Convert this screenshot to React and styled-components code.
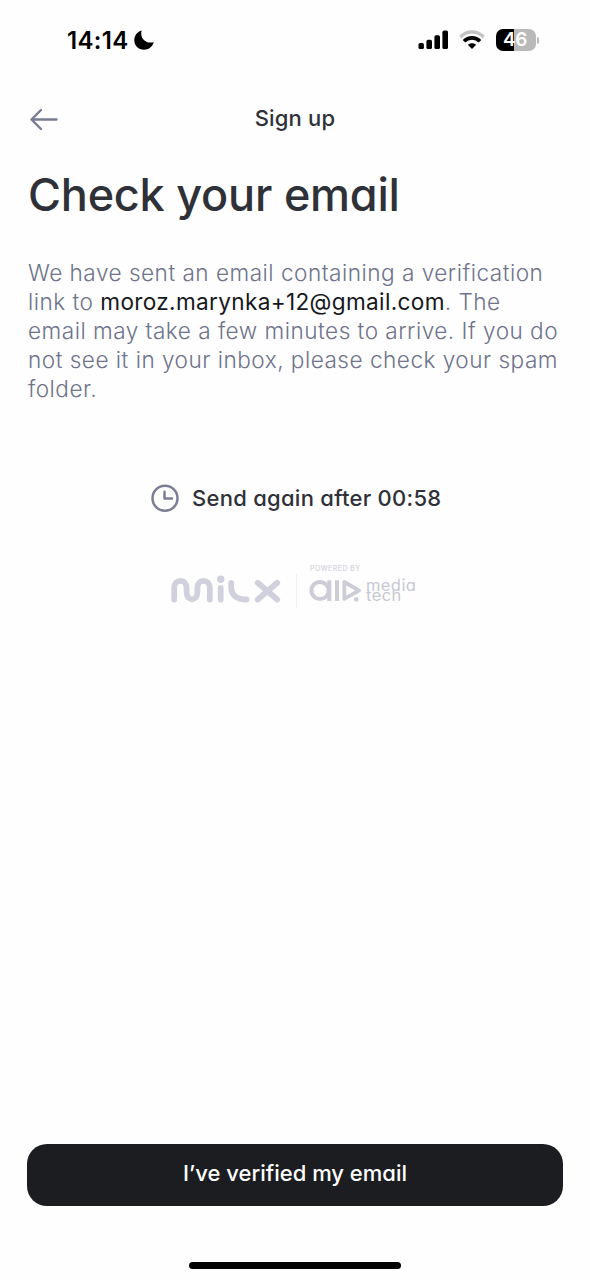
import React from "react";
import styled, { createGlobalStyle } from "styled-components";

const GlobalStyle = createGlobalStyle`
  *, *::before, *::after { box-sizing: border-box; }
  body { margin: 0; background: #fefefe; }
  svg { display: block; flex: none; }
`;

const Screen = styled.div`
  width: 590px;
  height: 1280px;
  display: flex;
  flex-direction: column;
  background: #fefefe;
  color: #2f3138;
  font-family: Inter, "Liberation Sans", sans-serif;
  overflow: hidden;
`;

const StatusBar = styled.header`
  height: 80px;
  padding: 0 51px 0 67px;
  display: flex;
  align-items: center;
  justify-content: space-between;
  color: #000;
`;

const StatusGroup = styled.div`
  display: flex;
  align-items: center;
  gap: ${(p) => p.$gap}px;
`;

const Time = styled.span`
  font-size: 24px;
  line-height: 30px;
  font-weight: 600;
  letter-spacing: 0.3px;
  padding-top: 1px;
`;

const BatteryWrap = styled.div`
  display: flex;
  align-items: center;
  gap: 1px;
`;

const Battery = styled.div`
  width: 40px;
  height: 22px;
  border-radius: 7px;
  background: linear-gradient(90deg, #000 46%, #b9b9b9 46%);
  color: #fff;
  font-size: 19px;
  line-height: 22px;
  font-weight: 600;
  text-align: center;
  letter-spacing: -0.3px;
  padding-right: 2px;
`;

const BatteryTip = styled.div`
  width: 2px;
  height: 7px;
  border-radius: 0 2px 2px 0;
  background: #b9b9b9;
`;

const NavBar = styled.nav`
  height: 78px;
  padding: 0 28px;
  display: grid;
  grid-template-columns: 60px 1fr 60px;
  align-items: center;
`;

const BackButton = styled.button`
  width: 32px;
  height: 32px;
  padding: 0;
  border: 0;
  background: none;
`;

const NavTitle = styled.div`
  text-align: center;
  font-size: 22px;
  line-height: 28px;
  font-weight: 500;
  letter-spacing: 0.2px;
  padding-bottom: 2px;
  font-feature-settings: "cv11";
`;

const Content = styled.main`
  flex: 1;
  padding: 8px 28px 0;
  display: flex;
  flex-direction: column;
`;

const Title = styled.h1`
  margin: 0;
  font-size: 45px;
  line-height: 58px;
  font-weight: 500;
  letter-spacing: -0.22px;
  white-space: nowrap;
  font-feature-settings: "cv11";
`;

const Message = styled.p`
  margin: 34px -10px 0 0;
  font-size: 22.6px;
  line-height: 29px;
  font-weight: 300;
  letter-spacing: 0.48px;
  color: #6f738b;
`;

const Line = styled.span`
  display: block;
  white-space: nowrap;
`;

const Email = styled.span`
  font-weight: 400;
  letter-spacing: 0.33px;
  color: #17181c;
`;

const Resend = styled.div`
  margin: 81px 0 0 123px;
  height: 28px;
  display: flex;
  align-items: center;
  gap: 13px;
  font-size: 22px;
  font-weight: 500;
  letter-spacing: 0.27px;
  white-space: nowrap;
  font-feature-settings: "cv11";
`;

const Brands = styled.div`
  margin: 51px 0 0 143px;
  display: flex;
  height: 46px;
`;

const MilxLogo = styled.svg`
  margin-top: 12px;
`;

const Divider = styled.div`
  width: 1px;
  height: 34px;
  margin: 11px 12px 0 15px;
  background: #f0f0f4;
`;

const Partner = styled.div`
  display: flex;
  flex-direction: column;
`;

const PoweredBy = styled.div`
  padding: 1px 0 0 1px;
  font-size: 7px;
  line-height: 10px;
  letter-spacing: 0.45px;
  color: #c9c9d3;
  white-space: nowrap;
`;

const PartnerRow = styled.div`
  display: flex;
  gap: 4px;
  margin-top: 3px;
`;

const PartnerName = styled.div`
  padding-top: 3px;
  font-size: 16.5px;
  line-height: 10px;
  letter-spacing: 0.4px;
  font-weight: 400;
  color: #c8c8d3;
  font-feature-settings: "cv11";
`;

const Footer = styled.footer`
  padding: 0 27px;
  height: 136px;
  display: flex;
  flex-direction: column;
  align-items: center;
`;

const PrimaryButton = styled.button`
  width: 100%;
  height: 62px;
  border: 0;
  border-radius: 20px;
  background: #1c1d21;
  color: #fff;
  font-family: inherit;
  font-size: 22px;
  font-weight: 500;
  padding: 0 0 4px;
  font-feature-settings: "cv11";
`;

const HomeIndicator = styled.div`
  margin-top: 56px;
  width: 212px;
  height: 7px;
  border-radius: 4px;
  background: #000;
`;

const MoonIcon = () => (
  <svg width="20" height="20" viewBox="0 0 20 20">
    <path d="M7.6 .4C5.8 7 10.5 14.4 19.8 12.2C18.2 17 14.5 19.7 10 19.7C4.5 19.7 .3 15.6 .3 10.2C.3 5.6 3.2 1.6 7.6 .4Z" fill="#000" />
  </svg>
);

const SignalIcon = () => (
  <svg width="30" height="20" viewBox="0 0 30 20">
    <rect x="0.5" y="13" width="5.4" height="6" rx="1.6" />
    <rect x="8.4" y="9.8" width="5.6" height="9.2" rx="1.6" />
    <rect x="16.4" y="5.3" width="5.6" height="13.7" rx="1.6" />
    <rect x="24.4" y="0.6" width="5.6" height="18.4" rx="1.6" />
  </svg>
);

const WifiIcon = () => (
  <svg width="26" height="20" viewBox="0 0 26 20" fill="none">
    <path d="M1.3 7C7.5 .3 18.5 .3 24.7 7" stroke="#c4c4c4" strokeWidth="3.4" />
    <path d="M5 11.2C9.4 6.7 16.6 6.7 21 11.2" stroke="#000" strokeWidth="3.6" />
    <path d="M8.8 14.8C11.2 12.7 14.8 12.7 17.2 14.8L13 19Z" fill="#000" />
  </svg>
);

const ArrowIcon = () => (
  <svg width="32" height="32" viewBox="0 0 32 32" fill="none" stroke="#777c91" strokeWidth="2.4" strokeLinecap="round" strokeLinejoin="round">
    <path d="M28.5 16.5H3.5M13 7L3.5 16.5L13 26" />
  </svg>
);

const ClockIcon = () => (
  <svg width="28" height="28" viewBox="0 0 28 28" fill="none" stroke="#7c7e98" strokeWidth="2.5" strokeLinecap="round" strokeLinejoin="round">
    <circle cx="14" cy="14.2" r="12.5" />
    <path d="M13.5 7.8V14.6H21" />
  </svg>
);

const MilxMark = () => (
  <MilxLogo width="110" height="29" viewBox="0 0 110 29" fill="none" stroke="#d0d1dc" strokeWidth="5.8" strokeLinecap="round">
    <path d="M3.2 24.5V13C3.2 3.4 15.6 3.4 15.6 13V17C15.6 26.8 26.4 26.8 26.4 17V13C26.4 3.4 38.8 3.4 38.8 13V24.5" />
    <path d="M49.7 13V24.5M60.2 8V12C60.2 20.5 66 24.5 75.5 24.5M86.7 7.8L106.2 24.5M106.2 7.8L86.7 24.5" />
    <circle cx="49.7" cy="4.2" r="3.7" fill="#d0d1dc" stroke="none" />
  </MilxLogo>
);

const AidMark = () => (
  <svg width="53" height="26" viewBox="0 0 53 26" fill="none" stroke="#cdcdd8" strokeWidth="4">
    <circle cx="11" cy="13.5" r="8.6" />
    <path d="M20.3 3.2V24M28 3.2V24" />
    <path d="M35.3 5V21.8L50 13.5Z" strokeWidth="3.8" strokeLinejoin="round" />
    <circle cx="47.2" cy="22.4" r="2.3" fill="#cdcdd8" stroke="none" />
  </svg>
);

export default function App() {
  return (
    <>
      <GlobalStyle />
      <Screen>
        <StatusBar>
          <StatusGroup $gap={6}>
            <Time>14:14</Time>
            <MoonIcon />
          </StatusGroup>
          <StatusGroup $gap={11}>
            <SignalIcon />
            <WifiIcon />
            <BatteryWrap>
              <Battery>46</Battery>
              <BatteryTip />
            </BatteryWrap>
          </StatusGroup>
        </StatusBar>
        <NavBar>
          <BackButton aria-label="Back">
            <ArrowIcon />
          </BackButton>
          <NavTitle>Sign up</NavTitle>
        </NavBar>
        <Content>
          <Title>Check your email</Title>
          <Message>
            <Line>We have sent an email containing a verification</Line>
            <Line>
              link to <Email>moroz.marynka+12@gmail.com</Email>. The
            </Line>
            <Line>email may take a few minutes to arrive. If you do</Line>
            <Line>not see it in your inbox, please check your spam</Line>
            <Line>folder.</Line>
          </Message>
          <Resend>
            <ClockIcon />
            <span>Send again after 00:58</span>
          </Resend>
          <Brands>
            <MilxMark />
            <Divider />
            <Partner>
              <PoweredBy>POWERED BY</PoweredBy>
              <PartnerRow>
                <AidMark />
                <PartnerName>
                  <Line>media</Line>
                  <Line>tech</Line>
                </PartnerName>
              </PartnerRow>
            </Partner>
          </Brands>
        </Content>
        <Footer>
          <PrimaryButton>I’ve verified my email</PrimaryButton>
          <HomeIndicator />
        </Footer>
      </Screen>
    </>
  );
}
